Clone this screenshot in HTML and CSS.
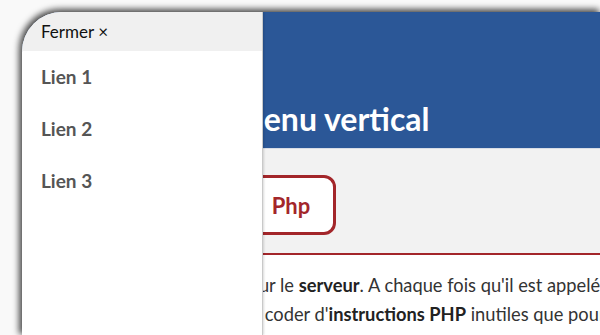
FILE: index.html
```html
<!DOCTYPE html>
<html lang="fr">
<head>
  <meta charset="UTF-8" />
  <meta name="viewport" content="width=device-width, initial-scale=1" />
  <title>Menu vertical</title>
  <link rel="stylesheet" href="styles.css">
</head>
<body>
  <div class="screen">
    <div class="page">
      <header class="banner">
        <h1>Menu vertical</h1>
      </header>
      <div class="tabs">
        <a class="tab" href="#">Php</a>
      </div>
      <div class="content">
        <p>sur le <b>serveur</b>. A chaque fois qu'il est appelé<br>
        à coder d'<b>instructions PHP</b> inutiles que pour</p>
      </div>
    </div>

    <!-- Menu coulissant -->
    <nav class="sidebar">
      <div class="close">Fermer &times;</div>
      <a href="#">Lien 1</a>
      <a href="#">Lien 2</a>
      <a href="#">Lien 3</a>
    </nav>
  </div>
</body>
</html>
```

FILE: styles.css
```css
/* Fond */
body {
  margin: 0;
  background-color: #f9f9f9;
  font-family: Lato, 'Open Sans', sans-serif;
  overflow: hidden;
}

/* Cadre arrondi */
.screen {
  position: relative;
  margin: 12px 0 0 22px;
  height: 323px;
  background-color: #fff;
  border-top-left-radius: 40px;
  box-shadow: -2px -2px 6px 1px rgba(0, 0, 0, 0.7);
  overflow: hidden;
}

/* Page */
.banner {
  background-color: #2b5797;
  height: 136px;
  display: flex;
  align-items: flex-end;
  border-bottom: 1px solid #d8dde6;
}

.banner h1 {
  margin: 0 0 10px 212px;
  color: #fff;
  font-size: 32px;
  font-weight: bold;
}

.tabs {
  background-color: #f2f2f2;
  height: 106px;
  padding: 26px 0 0 224px;
  box-sizing: border-box;
  border-bottom: 2px solid #a3262a;
}

.tab {
  display: flex;
  align-items: center;
  justify-content: center;
  width: 90px;
  height: 60px;
  box-sizing: border-box;
  border: 3px solid #a3262a;
  border-radius: 12px;
  background-color: #fff;
  color: #a3262a;
  font-size: 22px;
  font-weight: bold;
  text-decoration: none;
}

.content {
  padding: 16px 0 0 229px;
}

.content p {
  margin: 0;
  color: #333;
  font-size: 18.3px;
  line-height: 29px;
  white-space: nowrap;
}

.content b {
  color: #222;
}

/* Menu lateral */
.sidebar {
  position: absolute;
  top: 0;
  left: 0;
  bottom: 0;
  width: 240px;
  background-color: #fff;
  border-right: 1px solid #c9c9c9;
  box-shadow: 1px 0 2px rgba(0, 0, 0, 0.15);
}

.close {
  height: 39px;
  line-height: 40px;
  padding-left: 19px;
  background-color: #f0f0f0;
  color: #111;
  font-size: 17px;
}

.sidebar a {
  display: block;
  height: 52px;
  line-height: 52px;
  padding-left: 19px;
  color: #555;
  font-size: 19px;
  font-weight: bold;
  text-decoration: none;
}
```
